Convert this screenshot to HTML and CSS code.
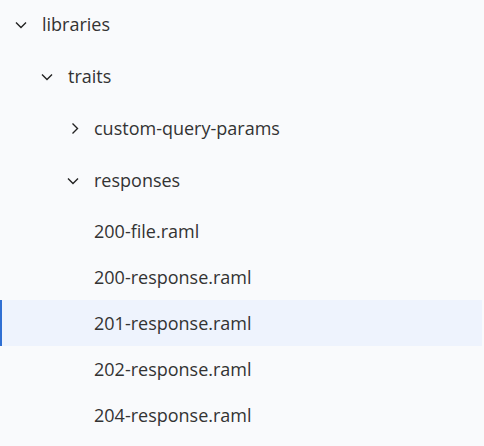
FILE: index.html
```html
<!DOCTYPE html>
<html>
<head>
<meta charset="utf-8">
<link rel="stylesheet" href="styles.css">
</head>
<body>
<div class="tree">
  <div class="row folder lvl0">
    <svg class="chev" viewBox="0 0 16 16"><path d="M3 6.5 L8 11.5 L13 6.5"/></svg>
    <span class="label">libraries</span>
  </div>
  <div class="row folder lvl1">
    <svg class="chev" viewBox="0 0 16 16"><path d="M3 6.5 L8 11.5 L13 6.5"/></svg>
    <span class="label">traits</span>
  </div>
  <div class="row folder lvl2">
    <svg class="chev" viewBox="0 0 16 16"><path d="M7.5 3.5 L12.5 8.5 L7.5 13.5"/></svg>
    <span class="label">custom-query-params</span>
  </div>
  <div class="row folder lvl2">
    <svg class="chev" viewBox="0 0 16 16"><path d="M3 6.5 L8 11.5 L13 6.5"/></svg>
    <span class="label">responses</span>
  </div>
  <div class="row leaf">200-file.raml</div>
  <div class="row leaf">200-response.raml</div>
  <div class="row leaf selected">201-response.raml</div>
  <div class="row leaf">202-response.raml</div>
  <div class="row leaf">204-response.raml</div>
</div>
</body>
</html>
```
FILE: styles.css
```css
html, body {
  margin: 0;
  padding: 0;
  background: #f9fafc;
}
.tree {
  width: 482px;
  padding-top: 1px;
  font-family: "Open Sans", sans-serif;
  font-size: 18px;
  color: #333;
}
.row {
  display: flex;
  align-items: center;
  height: 46px;
  box-sizing: border-box;
}
.folder {
  margin-bottom: 6px;
}
.folder:nth-child(4) {
  margin-bottom: 5px;
}
.lvl0 { padding-left: 13px; }
.lvl1 { padding-left: 39px; }
.lvl2 { padding-left: 65px; }
.chev {
  width: 16px;
  height: 16px;
  margin-right: 13px;
  flex: none;
}
.chev path {
  fill: none;
  stroke: #222;
  stroke-width: 1.4;
}
.leaf {
  padding-left: 94px;
}
.selected {
  background: #eef3fd;
  border-left: 2px solid #2f6fd3;
  padding-left: 92px;
}
```
